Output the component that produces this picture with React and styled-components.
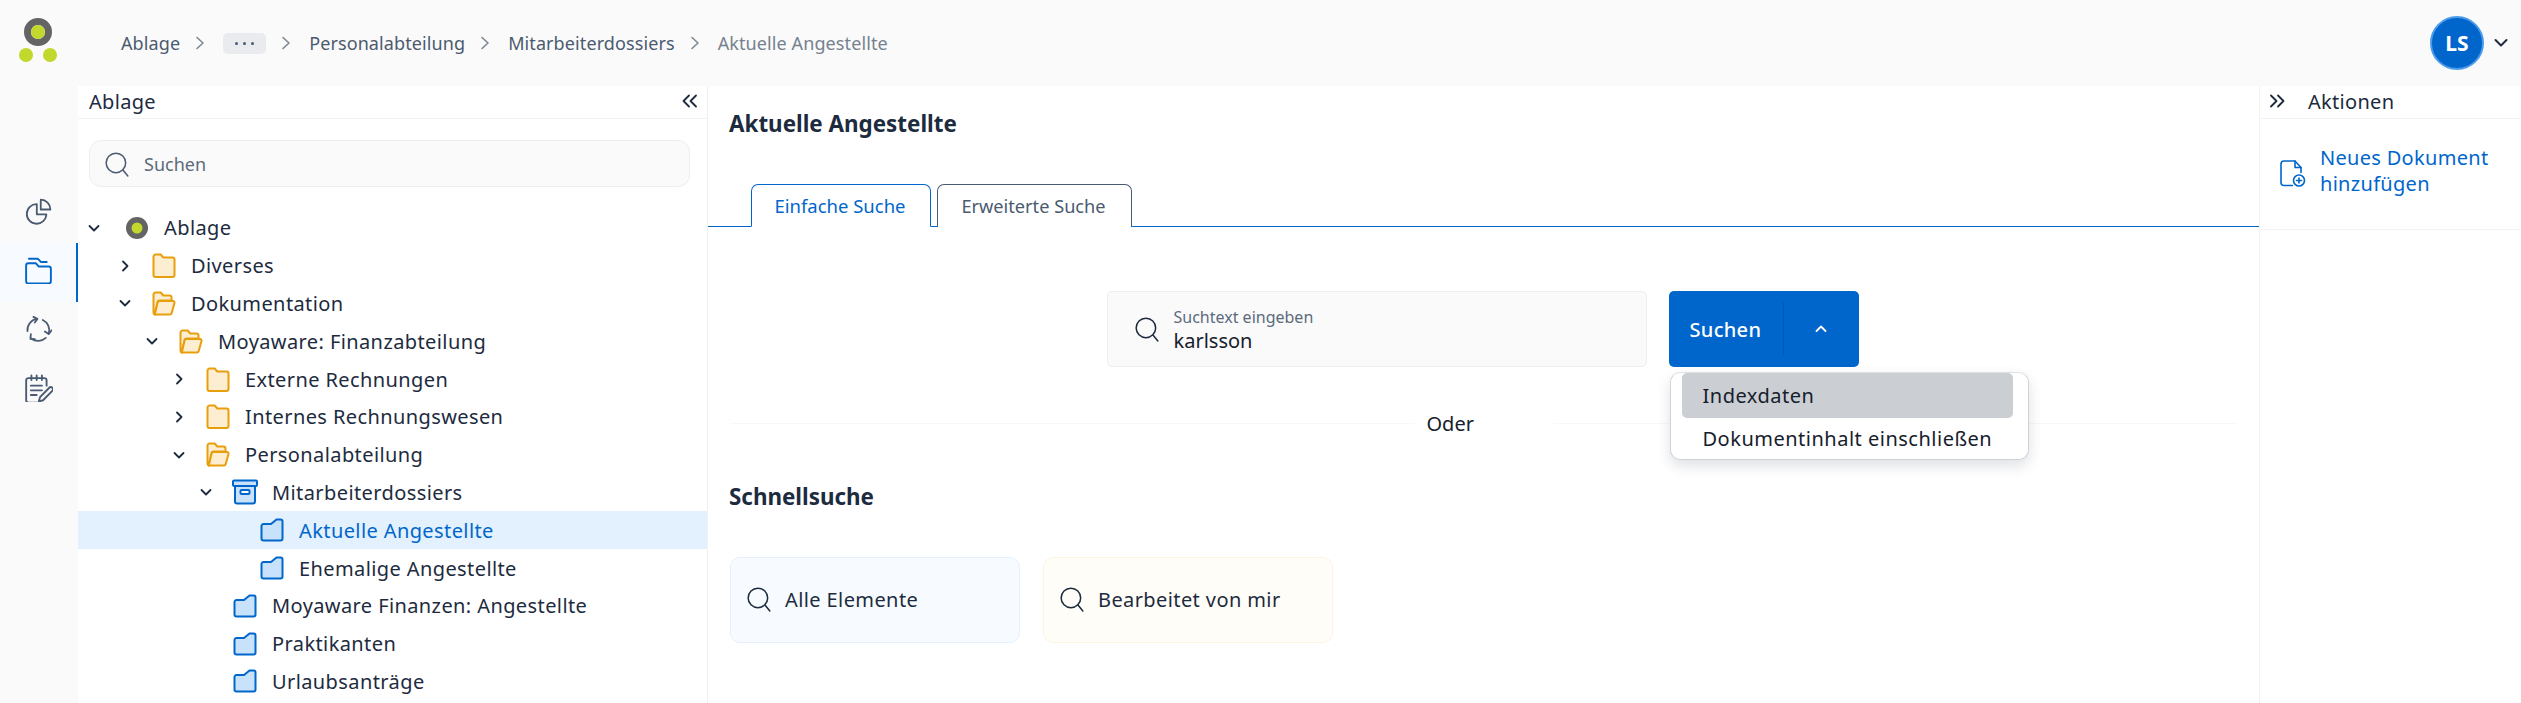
import React from "react";
import styled, { createGlobalStyle } from "styled-components";

const BLUE = "#0066cc";
const INK = "#1d2b3e";
const SLATE = "#4a5a70";
const FONT = `"Noto Sans", "Liberation Sans", sans-serif`;

const GlobalStyle = createGlobalStyle`
  html, body { margin: 0; padding: 0; background: #fff; }
  body { font-family: ${FONT}; color: ${INK}; overflow: hidden; }
  * { box-sizing: border-box; }
`;

const Page = styled.div`
  width: 2521px;
  height: 703px;
  display: flex;
  flex-direction: column;
  overflow: hidden;
  background: #fafafa;
`;

const Header = styled.header`
  height: 86px;
  flex: none;
  display: flex;
  align-items: center;
  padding: 0 12px 0 19px;
`;

const Logo = styled.svg`
  width: 46px;
  height: 52px;
  flex: none;
  margin-top: 2px;
`;

const Crumbs = styled.nav`
  display: flex;
  align-items: center;
  margin-left: 56px;
  flex: 1;
  font-size: 18px;
  letter-spacing: 0.1px;
  color: ${SLATE};
`;

const Crumb = styled.span`
  color: ${(p) => (p.$last ? "#75818f" : SLATE)};
`;

const CrumbSep = styled.svg`
  width: 12px;
  height: 18px;
  margin: 0 17px 0 14px;
  flex: none;
`;

const DotsPill = styled.span`
  width: 43px;
  height: 21px;
  border-radius: 5px;
  background: #e9ebee;
  display: flex;
  align-items: center;
  justify-content: center;
  gap: 5px;
`;

const Dot = styled.i`
  width: 3px;
  height: 3px;
  border-radius: 50%;
  background: ${SLATE};
`;

const Avatar = styled.div`
  width: 54px;
  height: 54px;
  border-radius: 50%;
  background: ${BLUE};
  border: 2px solid #4b9ceb;
  color: #fff;
  font-weight: 700;
  font-size: 21px;
  display: flex;
  align-items: center;
  justify-content: center;
`;

const AvatarCaret = styled.svg`
  width: 14px;
  height: 10px;
  margin-left: 10px;
  margin-right: 1px;
`;

const Body = styled.div`
  flex: 1;
  display: flex;
  min-height: 0;
`;

const Rail = styled.aside`
  width: 78px;
  flex: none;
  padding-top: 98px;
  display: flex;
  flex-direction: column;
`;

const RailItem = styled.div`
  height: 59px;
  display: flex;
  align-items: center;
  justify-content: center;
  padding: 0 0 5px 1px;
  background: ${(p) => (p.$active ? "#f7fbff" : "transparent")};
  border-right: 2px solid ${(p) => (p.$active ? BLUE : "transparent")};
`;

const TreePanel = styled.section`
  width: 630px;
  flex: none;
  background: #fff;
  border-right: 1px solid #f1f1f1;
`;

const PanelHead = styled.div`
  height: 33px;
  display: flex;
  align-items: center;
  justify-content: space-between;
  padding: 0 8px 2px 11px;
  border-bottom: 1px solid #f3f3f3;
  font-size: 20px;
  letter-spacing: 0.3px;
`;

const TreeSearch = styled.div`
  margin: 21px 17px 0 11px;
  height: 47px;
  border: 1px solid #eeeeee;
  border-radius: 12px;
  background: #fafafa;
  display: flex;
  align-items: center;
  padding-left: 14px;
  gap: 14px;
  color: #5c6b7c;
  font-size: 18px;
`;

const Tree = styled.ul`
  list-style: none;
  margin: 22px 0 0;
  padding: 0;
`;

const Row = styled.li`
  height: 37.8px;
  display: flex;
  align-items: center;
  padding-left: ${(p) => p.$indent}px;
  background: ${(p) => (p.$selected ? "#e3f0fd" : "transparent")};
  color: ${(p) => (p.$selected ? BLUE : INK)};
  font-size: 20px;
  letter-spacing: 0.4px;
`;

const Toggle = styled.span`
  width: 16px;
  height: 16px;
  flex: none;
  display: flex;
  align-items: center;
  justify-content: center;
  margin-right: 19px;
`;

const RowIcon = styled.span`
  width: 24px;
  height: 28px;
  flex: none;
  display: flex;
  align-items: center;
  justify-content: center;
  margin-left: ${(p) => (p.$logo ? 4 : 0)}px;
  margin-right: 15px;
`;

const Main = styled.main`
  flex: 1;
  min-width: 0;
  background: #fff;
  display: flex;
  flex-direction: column;
`;

const PageTitle = styled.h1`
  margin: 22px 0 0 21px;
  font-size: 22.4px;
  line-height: 32px;
  font-weight: 700;
  color: ${INK};
`;

const TabBar = styled.div`
  margin-top: 44px;
  height: 43px;
  display: flex;
  gap: 6px;
  padding-left: 43px;
  border-bottom: 1px solid ${BLUE};
`;

const Tab = styled.div`
  height: 43px;
  width: ${(p) => p.$width}px;
  display: flex;
  align-items: center;
  justify-content: center;
  padding-right: 2px;
  border: 1px solid ${(p) => (p.$active ? BLUE : SLATE)};
  border-bottom: ${(p) => (p.$active ? "1px solid #fff" : "none")};
  border-radius: 7px 7px 0 0;
  background: #fff;
  color: ${(p) => (p.$active ? BLUE : SLATE)};
  font-size: ${(p) => (p.$active ? 18.5 : 18.2)}px;
`;

const SearchRow = styled.div`
  margin-top: 64px;
  padding-right: 2px;
  display: flex;
  justify-content: center;
  gap: 22px;
`;

const SearchField = styled.div`
  width: 540px;
  height: 76px;
  border: 1px solid #eeeeee;
  border-radius: 5px;
  background: #fafafa;
  display: flex;
  align-items: center;
  padding-left: 26px;
  gap: 14px;
`;

const FieldText = styled.div`
  display: flex;
  flex-direction: column;
  padding-top: 2px;
`;

const FieldLabel = styled.span`
  font-size: 16px;
  line-height: 22px;
  color: #5c6b7c;
`;

const FieldValue = styled.span`
  font-size: 20px;
  line-height: 26px;
  color: #16202c;
`;

const SplitWrap = styled.div`
  position: relative;
`;

const SplitButton = styled.div`
  width: 190px;
  height: 76px;
  border-radius: 5px;
  background: ${BLUE};
  color: #fff;
  display: flex;
  align-items: center;
  font-size: 20px;
  letter-spacing: 0.3px;
  font-weight: 500;
`;

const SplitLabel = styled.span`
  padding-left: 21px;
  width: 115px;
  height: 54px;
  display: flex;
  align-items: center;
  border-right: 1px solid #0059b3;
`;

const SplitCaret = styled.span`
  flex: 1;
  display: flex;
  justify-content: center;
`;

const Menu = styled.div`
  position: absolute;
  top: 81px;
  left: 1px;
  width: 359px;
  height: 88px;
  border: 1px solid #cfd3d8;
  border-top-color: #dfe2e5;
  border-radius: 10px;
  background: #fff;
  box-shadow: 0 6px 14px rgba(30, 45, 70, 0.14);
  padding: 0 15px 0 11px;
  z-index: 5;
`;

const MenuItem = styled.div`
  height: ${(p) => (p.$active ? 45 : 41)}px;
  display: flex;
  align-items: center;
  padding-left: 21px;
  border-radius: 5px;
  background: ${(p) => (p.$active ? "#cbcfd3" : "transparent")};
  color: #16202c;
  font-size: 20px;
  letter-spacing: 0.5px;
  white-space: nowrap;
`;

const OrRow = styled.div`
  margin-top: 38px;
  height: 36px;
  display: flex;
  align-items: center;
  padding: 0 22px;
`;

const OrLine = styled.span`
  flex: 1;
  height: 1px;
  background: #f8f8f8;
`;

const OrLabel = styled.span`
  width: 138px;
  padding-left: 12px;
  font-size: 20px;
  color: #16202c;
`;

const SectionTitle = styled.h2`
  margin: 41px 0 0 21px;
  font-size: 22.4px;
  line-height: 30px;
  font-weight: 700;
  color: ${INK};
`;

const QuickRow = styled.div`
  margin: 45px 0 0 22px;
  display: flex;
  gap: 23px;
`;

const QuickCard = styled.div`
  width: 290px;
  height: 86px;
  border-radius: 10px;
  border: 1px solid ${(p) => (p.$tone === "warm" ? "#fdf5e3" : "#e3f0fd")};
  background: ${(p) => (p.$tone === "warm" ? "#fffdf8" : "#f7fbff")};
  display: flex;
  align-items: center;
  padding: 0 0 2px 15px;
  gap: 13px;
  font-size: 20px;
  letter-spacing: 0.4px;
  color: ${INK};
`;

const ActionPanel = styled.aside`
  width: 262px;
  flex: none;
  background: #fff;
  border-left: 1px solid #f3f3f3;
`;

const ActionHead = styled.div`
  height: 33px;
  display: flex;
  align-items: center;
  padding: 0 0 2px 8px;
  gap: 22px;
  border-bottom: 1px solid #f3f3f3;
  font-size: 20px;
  letter-spacing: 0.3px;
`;

const ActionItem = styled.div`
  height: 111px;
  display: flex;
  align-items: center;
  padding: 0 0 0 20px;
  gap: 14px;
  border-bottom: 1px solid #f3f3f3;
  color: ${BLUE};
  font-size: 20px;
  letter-spacing: 0.3px;
  line-height: 26px;
`;

const ActionLabel = styled.span`
  padding-bottom: 6px;
`;

const Ico = ({ size = 24, w, h, stroke = "currentColor", sw = 1.5, children, vb = "0 0 24 24" }) => (
  <svg
    width={w || size}
    height={h || size}
    viewBox={vb}
    fill="none"
    stroke={stroke}
    strokeWidth={sw}
    strokeLinecap="round"
    strokeLinejoin="round"
    style={{ flex: "none", display: "block" }}
  >
    {children}
  </svg>
);

const SearchIcon = ({ size = 26, color = INK }) => (
  <Ico size={size} stroke={color} sw={1.4}>
    <circle cx="11" cy="11" r="9" />
    <path d="M17.5 17.5 22 23" />
  </Ico>
);

const ChevronDown = () => (
  <Ico size={14} vb="0 0 14 14" stroke={INK} sw={1.8}>
    <path d="M2.5 5 7 9.5 11.5 5" />
  </Ico>
);

const ChevronRight = () => (
  <Ico size={14} vb="0 0 14 14" stroke={INK} sw={1.8}>
    <path d="M5 2.5 9.5 7 5 11.5" />
  </Ico>
);

const DoubleChevron = ({ left }) => (
  <Ico w={18} h={14} vb="0 0 18 14" stroke={INK} sw={1.8}>
    {left ? <path d="M8 1.5 2.5 7 8 12.5M15 1.5 9.5 7 15 12.5" /> : <path d="M3 1.5 8.5 7 3 12.5M10 1.5 15.5 7 10 12.5" />}
  </Ico>
);

const FolderClosed = () => (
  <Ico w={24} h={25} vb="0 0 24 25" stroke="#e89f0c" sw={2}>
    <path
      d="M1.5 3.5a2 2 0 0 1 2-2h5.2l2.6 3h9.2a2 2 0 0 1 2 2v15.5a2 2 0 0 1-2 2h-17a2 2 0 0 1-2-2z"
      fill="#fdeed2"
    />
  </Ico>
);

const FolderOpen = () => (
  <Ico w={24} h={25} vb="0 0 24 25" stroke="#e89f0c" sw={2}>
    <path
      d="M1.5 3.5a2 2 0 0 1 2-2h5.2l2.6 3h6.2a2 2 0 0 1 2 2v3H7.5a2 2 0 0 0-1.9 1.4L2.6 23.5H3.5a2 2 0 0 1-2-2z"
      fill="#fdeed2"
    />
    <path d="M5.6 11.5a2 2 0 0 1 1.9-1.4h13.6a1.5 1.5 0 0 1 1.4 2l-2.8 9.9a2 2 0 0 1-1.9 1.5H2.8z" fill="#fdeed2" />
  </Ico>
);

const FolderBlue = () => (
  <Ico w={24} h={24} vb="0 0 24 24" stroke={BLUE} sw={2}>
    <path
      d="M1.5 8a2 2 0 0 1 2-2h7.5l5.5-4.5h4a2 2 0 0 1 2 2v17a2 2 0 0 1-2 2h-17a2 2 0 0 1-2-2z"
      fill="#c9e2fb"
    />
  </Ico>
);

const ArchiveBox = () => (
  <Ico w={26} h={26} vb="0 0 26 26" stroke={BLUE} sw={2}>
    <path d="M3 7h20v15.5a2 2 0 0 1-2 2H5a2 2 0 0 1-2-2z" fill="#c9e2fb" />
    <rect x="1" y="1.5" width="24" height="5.5" rx="1" fill="#c9e2fb" />
    <rect x="8.5" y="11" width="9" height="4" rx="1" fill="#fff" />
  </Ico>
);

const LogoMark = ({ size = 22 }) => (
  <svg width={size} height={size} viewBox="0 0 28 28" style={{ display: "block" }}>
    <circle cx="14" cy="14" r="14" fill="#646464" />
    <circle cx="14" cy="14" r="7" fill="#c3d82c" />
  </svg>
);

const PieIcon = () => (
  <Ico size={27} stroke={SLATE} sw={1.6}>
    <path d="M10.5 5.5a8.7 8.7 0 1 0 8.5 9h-8.5z" />
    <path d="M14 1.5v8.7h8.6a8.7 8.7 0 0 0-8.6-8.7z" />
  </Ico>
);

const FoldersIcon = () => (
  <Ico size={27} stroke={BLUE} sw={1.7}>
    <path d="M3.5 1.5h7.8l3 3h5" />
    <path d="M1 7.5a2 2 0 0 1 2-2h6.5l2.8 3H21a2 2 0 0 1 2 2v11a2 2 0 0 1-2 2H3a2 2 0 0 1-2-2z" />
  </Ico>
);

const CycleIcon = () => (
  <Ico size={27} stroke={SLATE} sw={1.6}>
    <path d="M2.2 13.5A10 10 0 0 1 10.5 2.6" />
    <path d="M7.5.8 11 2.6 8.7 5.8" />
    <path d="M15.8 3.6a10 10 0 0 1 5.3 12" />
    <path d="M23.6 12.7 21 16.1l-3.3-2.3" />
    <path d="M18.5 19.5a10 10 0 0 1-13 .5" />
    <path d="M5.2 16.2 4.8 20.3l4 .2" />
  </Ico>
);

const NotesIcon = () => (
  <Ico size={28} stroke={SLATE} sw={1.6}>
    <path d="M18.5 10V5.5a2 2 0 0 0-2-2H3a2 2 0 0 0-2 2v17a2 2 0 0 0 2 2h7.5" />
    <path d="M5.5 1.2v4M10 1.2v4M14.5 1.2v4M5 10h9.5M5 14h9.5M5 18h5" />
    <path d="M20.8 11.8a1.8 1.8 0 0 1 2.6 2.6L15.5 22.5l-3.7 1.1 1.1-3.7z" />
  </Ico>
);

const AddDocIcon = () => (
  <Ico w={26} h={28} vb="0 0 26 28" stroke={BLUE} sw={1.6}>
    <path d="M12.5 25.5H4a3 3 0 0 1-3-3V4a3 3 0 0 1 3-3h11l6 6.5v5" />
    <path d="M15 1v6.5h6" />
    <circle cx="19" cy="20.5" r="5.5" />
    <path d="M19 18v5M16.5 20.5h5" />
  </Ico>
);

const treeRows = [
  { name: "Ablage", indent: 8, toggle: "down", icon: "logo" },
  { name: "Diverses", indent: 39, toggle: "right", icon: "closed" },
  { name: "Dokumentation", indent: 39, toggle: "down", icon: "open" },
  { name: "Moyaware: Finanzabteilung", indent: 66, toggle: "down", icon: "open" },
  { name: "Externe Rechnungen", indent: 93, toggle: "right", icon: "closed" },
  { name: "Internes Rechnungswesen", indent: 93, toggle: "right", icon: "closed" },
  { name: "Personalabteilung", indent: 93, toggle: "down", icon: "open" },
  { name: "Mitarbeiterdossiers", indent: 120, toggle: "down", icon: "box" },
  { name: "Aktuelle Angestellte", indent: 147, icon: "blue", selected: true },
  { name: "Ehemalige Angestellte", indent: 147, icon: "blue" },
  { name: "Moyaware Finanzen: Angestellte", indent: 120, icon: "blue" },
  { name: "Praktikanten", indent: 120, icon: "blue" },
  { name: "Urlaubsanträge", indent: 120, icon: "blue" },
];

const rowIcons = {
  logo: <LogoMark />,
  closed: <FolderClosed />,
  open: <FolderOpen />,
  box: <ArchiveBox />,
  blue: <FolderBlue />,
};

const crumbs = ["Personalabteilung", "Mitarbeiterdossiers"];

const Sep = () => (
  <CrumbSep viewBox="0 0 12 18" fill="none" stroke="#7b8794" strokeWidth="1.6" strokeLinecap="round" strokeLinejoin="round">
    <path d="M3 3.5 9 9l-6 5.5" />
  </CrumbSep>
);

export default function App() {
  return (
    <Page>
      <GlobalStyle />
      <Header>
        <Logo viewBox="0 0 46 52">
          <circle cx="19" cy="14" r="10.5" fill="none" stroke="#646464" strokeWidth="7" />
          <circle cx="19" cy="14" r="7" fill="#c3d82c" />
          <circle cx="7" cy="37" r="7" fill="#c3d82c" />
          <circle cx="31" cy="37" r="7" fill="#c3d82c" />
        </Logo>
        <Crumbs>
          <Crumb>Ablage</Crumb>
          <Sep />
          <DotsPill>
            <Dot />
            <Dot />
            <Dot />
          </DotsPill>
          <Sep />
          {crumbs.map((c) => (
            <React.Fragment key={c}>
              <Crumb>{c}</Crumb>
              <Sep />
            </React.Fragment>
          ))}
          <Crumb $last>Aktuelle Angestellte</Crumb>
        </Crumbs>
        <Avatar>LS</Avatar>
        <AvatarCaret viewBox="0 0 14 10" fill="none" stroke={INK} strokeWidth="2" strokeLinecap="round" strokeLinejoin="round">
          <path d="M1.5 2 7 7.5 12.5 2" />
        </AvatarCaret>
      </Header>
      <Body>
        <Rail>
          <RailItem>
            <PieIcon />
          </RailItem>
          <RailItem $active>
            <FoldersIcon />
          </RailItem>
          <RailItem>
            <CycleIcon />
          </RailItem>
          <RailItem>
            <NotesIcon />
          </RailItem>
        </Rail>
        <TreePanel>
          <PanelHead>
            Ablage
            <DoubleChevron left />
          </PanelHead>
          <TreeSearch>
            <SearchIcon color={SLATE} />
            Suchen
          </TreeSearch>
          <Tree>
            {treeRows.map((r) => (
              <Row key={r.name} $indent={r.indent} $selected={r.selected}>
                <Toggle>
                  {r.toggle === "down" && <ChevronDown />}
                  {r.toggle === "right" && <ChevronRight />}
                </Toggle>
                <RowIcon $logo={r.icon === "logo"}>{rowIcons[r.icon]}</RowIcon>
                {r.name}
              </Row>
            ))}
          </Tree>
        </TreePanel>
        <Main>
          <PageTitle>Aktuelle Angestellte</PageTitle>
          <TabBar>
            <Tab $active $width={180}>
              Einfache Suche
            </Tab>
            <Tab $width={195}>Erweiterte Suche</Tab>
          </TabBar>
          <SearchRow>
            <SearchField>
              <SearchIcon />
              <FieldText>
                <FieldLabel>Suchtext eingeben</FieldLabel>
                <FieldValue>karlsson</FieldValue>
              </FieldText>
            </SearchField>
            <SplitWrap>
              <SplitButton>
                <SplitLabel>Suchen</SplitLabel>
                <SplitCaret>
                  <Ico size={14} vb="0 0 14 14" stroke="#fff" sw={1.8}>
                    <path d="M2.5 9 7 4.5 11.5 9" />
                  </Ico>
                </SplitCaret>
              </SplitButton>
              <Menu>
                <MenuItem $active>Indexdaten</MenuItem>
                <MenuItem>Dokumentinhalt einschließen</MenuItem>
              </Menu>
            </SplitWrap>
          </SearchRow>
          <OrRow>
            <OrLine />
            <OrLabel>Oder</OrLabel>
            <OrLine />
          </OrRow>
          <SectionTitle>Schnellsuche</SectionTitle>
          <QuickRow>
            <QuickCard>
              <SearchIcon />
              Alle Elemente
            </QuickCard>
            <QuickCard $tone="warm">
              <SearchIcon />
              Bearbeitet von mir
            </QuickCard>
          </QuickRow>
        </Main>
        <ActionPanel>
          <ActionHead>
            <DoubleChevron />
            Aktionen
          </ActionHead>
          <ActionItem>
            <AddDocIcon />
            <ActionLabel>
              Neues Dokument
              <br />
              hinzufügen
            </ActionLabel>
          </ActionItem>
        </ActionPanel>
      </Body>
    </Page>
  );
}
